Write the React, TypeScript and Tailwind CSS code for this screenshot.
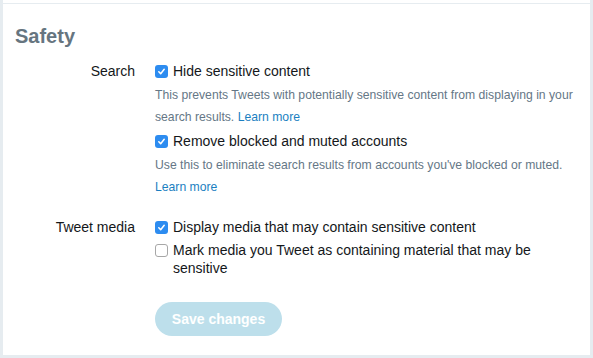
import React from "react";

function Check({ checked }: { checked: boolean }) {
  if (checked) {
    return (
      <span className="mt-[3px] flex h-[13px] w-[13px] shrink-0 items-center justify-center rounded-[3px] bg-[#2d8cf0]">
        <svg width="9" height="9" viewBox="0 0 10 10" fill="none">
          <path d="M2 5.3 L4.1 7.4 L8 2.6" stroke="white" strokeWidth="1.7" strokeLinecap="round" strokeLinejoin="round" />
        </svg>
      </span>
    );
  }
  return <span className="mt-[3px] h-[13px] w-[13px] shrink-0 rounded-[3px] border border-[#a7a7a7] bg-white" />;
}

function Option({ checked, children }: { checked: boolean; children: React.ReactNode }) {
  return (
    <label className="flex items-start gap-[5px] text-[14px] leading-[18px] text-[#14171a]">
      <Check checked={checked} />
      <span>{children}</span>
    </label>
  );
}

function Desc({ children }: { children: React.ReactNode }) {
  return <p className="mt-[4px] text-[12.2px] leading-[22px] text-[#657786]">{children}</p>;
}

export default function App() {
  return (
    <div className="h-[358px] w-[593px] bg-[#e6ecf0] px-[3px] pb-[3px]" style={{ fontFamily: '"Liberation Sans", Arial, sans-serif' }}>
      <div className="h-[355px] bg-white">
        <div className="h-[3px]" />
        <div className="border-t border-[#e6ecf0] pl-[12px] pr-[12px]">
          <h2 className="mt-[20px] text-[20px] font-bold leading-[24px] text-[#66757f]">Safety</h2>
          <div className="mt-[14px] grid grid-cols-[120px_1fr] gap-x-[20px]">
            <div className="text-right text-[14px] leading-[18px] text-[#14171a]">Search</div>
            <div>
              <Option checked>Hide sensitive content</Option>
              <Desc>
                This prevents Tweets with potentially sensitive content from displaying in your search results.{" "}
                <a className="text-[#1b7fc1]">Learn more</a>
              </Desc>
              <div className="mt-[4px]">
                <Option checked>Remove blocked and muted accounts</Option>
              </div>
              <Desc>
                Use this to eliminate search results from accounts you've blocked or muted.{" "}
                <a className="text-[#1b7fc1]">Learn more</a>
              </Desc>
            </div>
            <div className="mt-[20px] text-right text-[14px] leading-[18px] text-[#14171a]">Tweet media</div>
            <div className="mt-[20px]">
              <Option checked>Display media that may contain sensitive content</Option>
              <div className="mt-[5px]">
                <Option checked={false}>Mark media you Tweet as containing material that may be sensitive</Option>
              </div>
              <button className="mt-[25px] h-[34px] w-[127px] rounded-full bg-[#bddfeb] text-[14px] font-bold text-white">
                Save changes
              </button>
            </div>
          </div>
        </div>
      </div>
    </div>
  );
}
